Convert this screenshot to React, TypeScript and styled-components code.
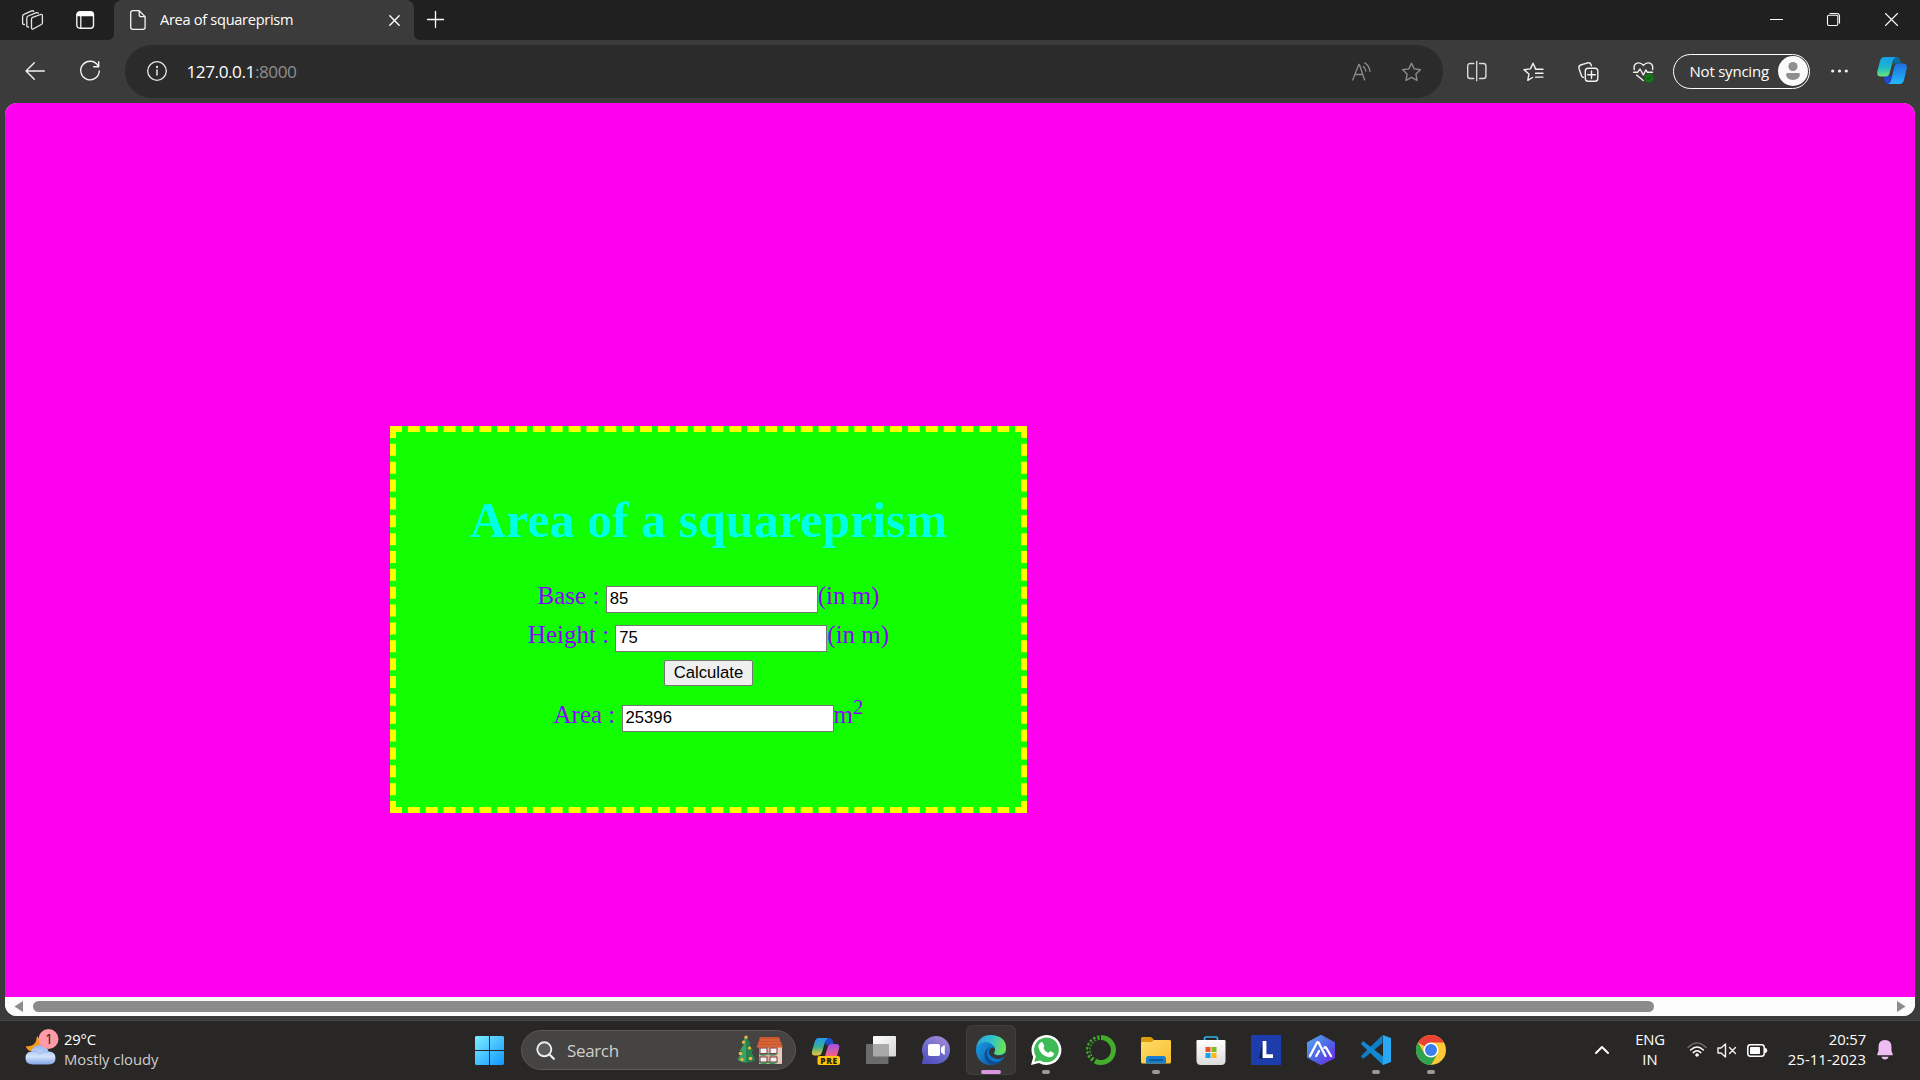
import React from 'react';
import styled, { createGlobalStyle } from 'styled-components';

const GlobalStyle = createGlobalStyle`
  html, body { margin: 0; padding: 0; background: #3b3b3b; overflow: hidden; }
  * { box-sizing: border-box; }
`;

const ui = `'Segoe UI', 'Open Sans', 'Noto Sans', sans-serif`;

const Screen = styled.div`
  width: 1920px;
  height: 1080px;
  display: flex;
  flex-direction: column;
  background: #3b3b3b;
  font-family: ${ui};
  color: #fff;
  overflow: hidden;
`;

/* ---------- shared ---------- */

const Glyph = styled.svg<{ $ml?: number; $mt?: number }>`
  display: block;
  flex: none;
  overflow: visible;
  margin-left: ${p => p.$ml ?? 0}px;
  margin-top: ${p => p.$mt ?? 0}px;
`;

const Label = styled.span<{ $size: number; $track?: number; $color?: string; $ml?: number; $w?: number; $mb?: number }>`
  flex: none;
  font-size: ${p => p.$size}px;
  letter-spacing: ${p => p.$track ?? 0}px;
  color: ${p => p.$color ?? '#fff'};
  margin-left: ${p => p.$ml ?? 0}px;
  margin-bottom: ${p => p.$mb ?? 0}px;
  width: ${p => (p.$w ? `${p.$w}px` : 'auto')};
  white-space: nowrap;
`;

/* ---------- tab strip ---------- */

const TabStrip = styled.header`
  flex: none;
  height: 40px;
  display: flex;
  background: #202020;
`;

const StripTools = styled.div`
  width: 114px;
  display: flex;
  align-items: center;
  background: #202020;
  border-bottom-right-radius: 6px;
`;

const TabBackdrop = styled.div`
  display: flex;
  width: 100%;
  background: linear-gradient(#202020 0 20px, #3b3b3b 20px 40px);
`;

const Tab = styled.div`
  width: 300px;
  display: flex;
  align-items: center;
  background: #3b3b3b;
  border-radius: 8px 8px 0 0;
`;

const StripRest = styled.div`
  flex: 1;
  display: flex;
  align-items: center;
  background: #202020;
  border-bottom-left-radius: 6px;
`;

/* ---------- toolbar ---------- */

const Toolbar = styled.nav`
  flex: none;
  height: 63px;
  display: flex;
  align-items: center;
  background: #3b3b3b;
`;

const Address = styled.div`
  width: 1318px;
  height: 53px;
  margin-left: 25px;
  border-radius: 27px;
  background: #2b2b2b;
  display: flex;
  align-items: center;
`;

const Port = styled.span`
  color: #8e8e8e;
`;

const Profile = styled.div`
  width: 137px;
  height: 35px;
  margin-left: 19px;
  margin-top: -1px;
  border: 1.4px solid #fff;
  border-radius: 18px;
  display: flex;
  align-items: center;
  justify-content: space-between;
  padding: 0 1px 0 16px;
`;

/* ---------- page ---------- */

const Viewport = styled.main`
  flex: none;
  margin: 0 5px;
  height: 913px;
  border-radius: 12px;
  overflow: hidden;
  background: #fcfcfc;
  display: flex;
  flex-direction: column;
`;

const Page = styled.div`
  flex: 1;
  background: #ff00ee;
  padding: 323px 0 0 385px;
`;

const Card = styled.section`
  width: 637px;
  height: 387px;
  border: 6px dashed #ffff00;
  background: #11ff00;
  color: #8a00ff;
  font-family: 'Times New Roman', 'Liberation Serif', serif;
  font-size: 25px;
  display: flex;
  flex-direction: column;
  align-items: center;
`;

const Heading = styled.h1`
  margin: 59px 0 0;
  height: 58px;
  line-height: 58px;
  font-size: 50px;
  font-weight: 700;
  color: #00ffe5;
  white-space: nowrap;
`;

const Row = styled.div<{ $h?: number; $mt?: number }>`
  height: ${p => p.$h ?? 39}px;
  margin-top: ${p => p.$mt ?? 0}px;
  line-height: ${p => p.$h ?? 39}px;
  white-space: pre;
  text-align: center;

  sup {
    font-size: 20.8px;
    line-height: 0;
  }
`;

const Field = styled.input`
  width: 212px;
  height: 27px;
  margin: 0;
  padding: 1px 3px;
  border: 1px solid #767676;
  border-radius: 0;
  background: #fff;
  color: #000;
  font: 16.67px Arial, 'Liberation Sans', sans-serif;
`;

const Calculate = styled.button`
  width: 89px;
  height: 26px;
  margin: 0;
  padding: 0;
  border: 1px solid #767676;
  border-radius: 2px;
  background: #efefef;
  color: #000;
  font: 16.67px/24px Arial, 'Liberation Sans', sans-serif;
`;

const ScrollBar = styled.div`
  flex: none;
  height: 19px;
  display: flex;
  align-items: center;
  background: #fcfcfc;
`;

const Thumb = styled.div`
  width: 1621px;
  height: 11px;
  margin-left: 10px;
  border-radius: 6px;
  background: #8b8b8b;
`;

/* ---------- taskbar ---------- */

const Taskbar = styled.footer`
  flex: none;
  height: 60px;
  margin-top: 4px;
  padding-bottom: 1px;
  display: flex;
  align-items: center;
  background: #292725;
  border-top: 1px solid #464544;
`;

const Weather = styled.div`
  width: 475px;
  display: flex;
  align-items: center;
  padding-left: 24px;
`;

const Stack = styled.div<{ $align: string; $w: number; $ml?: number }>`
  display: flex;
  flex-direction: column;
  align-items: ${p => p.$align};
  width: ${p => p.$w}px;
  margin-left: ${p => p.$ml ?? 0}px;
  margin-bottom: 2px;
  line-height: 20px;
`;

const Search = styled.div`
  width: 275px;
  height: 40px;
  margin-left: 17px;
  border: 1px solid #5b5958;
  border-radius: 20px;
  background: #464442;
  display: flex;
  align-items: center;
`;

const Apps = styled.div`
  display: flex;
  margin-left: 2px;
`;

const AppTile = styled.div<{ $active?: boolean }>`
  width: 50px;
  height: 50px;
  margin: 0 2.5px;
  border-radius: 6px;
  background: ${p => (p.$active ? '#373533' : 'transparent')};
  box-shadow: ${p => (p.$active ? 'inset 0 0 0 1px #403e3d' : 'none')};
  display: flex;
  flex-direction: column;
  align-items: center;
  padding-top: 10px;
`;

const Running = styled.i<{ $active?: boolean }>`
  width: ${p => (p.$active ? 20 : 8)}px;
  height: 4px;
  margin-top: 5px;
  border-radius: 2px;
  background: ${p => (p.$active ? '#d898df' : '#9b9a99')};
`;

const Tray = styled.div`
  display: flex;
  align-items: center;
  margin-left: 137px;
`;

type AppIconProps = { running?: boolean; active?: boolean; children: React.ReactNode };

function TaskApp({ running, active, children }: AppIconProps) {
  return (
    <AppTile $active={active}>
      <Glyph width="30" height="30" viewBox="0 0 30 30">{children}</Glyph>
      {(running || active) && <Running $active={active} />}
    </AppTile>
  );
}

const starPath =
  'M10.5 1.2 L13.2 6.9 L19.4 7.7 L14.9 12 L16 18.3 L10.5 15.3 L5 18.3 L6.1 12 L1.6 7.7 L7.8 6.9 Z';

const line = { fill: 'none', strokeLinecap: 'round', strokeLinejoin: 'round' } as const;

function BrowserTabs() {
  return (
    <TabStrip>
      <TabBackdrop>
        <StripTools>
          <Glyph $ml={22} width="21" height="20" viewBox="0 0 21 20" stroke="#e6e6e6" strokeWidth="1.3" {...line}>
            <path d="M9.5 9 q0-1.2 1.1-1.7 l8-2.8 q1.8-.5 1.8 1.3 v7 q0 1.2-1.1 1.7 l-7.8 4.3 q-2 .8-2-1.1z" />
            <path d="M6.5 17 q-1.7.2-1.7-1.3 V8 q0-1.5 1.3-2 l8.4-3.3 q1.4-.4 1.8.7" />
            <path d="M2.4 14.5 q-1.8.2-1.8-1.3 V6.3 q0-1.5 1.3-2 L9.7.9 q1.5-.5 2 .6" />
          </Glyph>
          <Glyph $ml={33} width="19" height="18" viewBox="0 0 19 18">
            <rect x=".8" y=".8" width="16.7" height="16.4" rx="3" fill="none" stroke="#f2f2f2" strokeWidth="1.4" />
            <path d="M.8 5.2V3.6Q.8.8 3.6.8h11.1q2.8 0 2.8 2.8v1.6z" fill="#fff" />
            <path d="M4.8 5v12" stroke="#f2f2f2" strokeWidth="1.3" />
          </Glyph>
        </StripTools>
        <Tab>
          <Glyph $ml={16} width="16" height="20" viewBox="0 0 16 20" stroke="#f2f2f2" strokeWidth="1.3" {...line}>
            <path d="M2.8.7h6.4l5.9 5.9v10.6q0 2.1-2.1 2.1H2.8Q.7 19.3.7 17.2V2.8Q.7.7 2.8.7z M9.2.9v3.8q0 1.9 1.9 1.9h3.8" />
          </Glyph>
          <Label $size={14.6} $track={-0.3} $ml={14} $w={229} $mb={2}>Area of squareprism</Label>
          <Glyph $ml={0} $mt={1} width="11" height="11" viewBox="0 0 11 11" stroke="#fff" strokeWidth="1.4" {...line}>
            <path d="M.8.8l9.4 9.4M10.2.8L.8 10.2" />
          </Glyph>
        </Tab>
        <StripRest>
          <Glyph $ml={13} $mt={-1} width="17" height="17" viewBox="0 0 17 17" stroke="#fff" strokeWidth="1.3" {...line}>
            <path d="M8.5.5v16M.5 8.5h16" />
          </Glyph>
          <Glyph $ml={1326} $mt={-1} width="13" height="13" viewBox="0 0 13 13">
            <path d="M0 6.5h13" stroke="#fff" strokeWidth="1" />
          </Glyph>
          <Glyph $ml={44} $mt={-1} width="13" height="13" viewBox="0 0 13 13" stroke="#fff" strokeWidth="1.1" {...line}>
            <rect x=".5" y="2.2" width="10.3" height="10.3" rx="1.4" />
            <path d="M3 .5h6.7q2.8 0 2.8 2.8V10" />
          </Glyph>
          <Glyph $ml={45} $mt={-1} width="13" height="13" viewBox="0 0 13 13" stroke="#fff" strokeWidth="1.1" {...line}>
            <path d="M.5.5l12 12M12.5.5l-12 12" />
          </Glyph>
        </StripRest>
      </TabBackdrop>
    </TabStrip>
  );
}

function BrowserToolbar() {
  return (
    <Toolbar>
      <Glyph $ml={25} $mt={-1} width="20" height="18" viewBox="0 0 20 18" stroke="#f2f2f2" strokeWidth="1.4" {...line}>
        <path d="M19.3 9H1M9.3.8L1 9l8.3 8.2" />
      </Glyph>
      <Glyph $ml={35} $mt={-1} width="20" height="20" viewBox="0 0 20 20" stroke="#f2f2f2" strokeWidth="1.4" {...line}>
        <path d="M18.3 5.3A9.3 9.3 0 1 0 19.3 10M18.7.8v5h-5" />
      </Glyph>
      <Address>
        <Glyph $ml={22} $mt={-1} width="20" height="20" viewBox="0 0 20 20" stroke="#e8e8e8" strokeWidth="1.3" {...line}>
          <circle cx="10" cy="10" r="9.3" />
          <path d="M10 9v5" strokeWidth="1.5" />
          <circle cx="10" cy="6" r=".5" fill="#e8e8e8" />
        </Glyph>
        <Label $size={17.2} $track={-0.46} $ml={19.5} $w={1165}>
          127.0.0.1<Port>:8000</Port>
        </Label>
        <Glyph $ml={0.5} $mt={-1} width="19" height="19" viewBox="0 0 19 19" stroke="#8c8c8c" strokeWidth="1.3" {...line}>
          <path d="M.7 18L6.8 2.5h.6L12.6 18M2.9 12.5h7.8" />
          <path d="M11.3 4.4q2.2 1.8 2.6 4.6M12.8.9q4.5 2.8 5.2 8.5" />
        </Glyph>
        <Glyph $ml={29.5} width="21" height="20" viewBox="0 0 21 20" stroke="#8c8c8c" strokeWidth="1.4" {...line}>
          <path d={starPath} />
        </Glyph>
      </Address>
      <Glyph $ml={24} $mt={-1} width="20" height="20" viewBox="0 0 20 20" stroke="#dcdcdc" strokeWidth="1.4" {...line}>
        <path d="M6.8 2.5H3.2Q.7 2.5.7 5v10q0 2.5 2.5 2.5h3.6M12.6 2.5h3.8q2.5 0 2.5 2.5v10q0 2.5-2.5 2.5h-3.8" />
        <path d="M9.7.3v19.4" strokeWidth="1.3" />
      </Glyph>
      <Glyph $ml={35.5} $mt={1} width="21" height="20" viewBox="0 0 21 20" stroke="#f2f2f2" strokeWidth="1.4" {...line}>
        <path d="M9.5 15.5L4.8 18.3 5.9 12 1 7.7l6.4-.8L10 1.2l2.5 5.4M12.5 7.3H20M12.5 11.2H20M12.5 15.1H20" />
      </Glyph>
      <Glyph $ml={34} $mt={1} width="21" height="20" viewBox="0 0 21 20" stroke="#f2f2f2" strokeWidth="1.4" {...line}>
        <rect x="7.3" y="6.3" width="12.5" height="13" rx="2.8" />
        <path d="M13.5 9v7.6M9.7 12.8h7.6" />
        <path d="M5.4 15.4q-1.3-.3-1.9-1.7L1 6.4Q.4 4 2.6 3L9.7.8q2.4-.6 3.3 1.7l.4 1.2" />
      </Glyph>
      <Glyph $ml={34} $mt={1} width="21" height="20" viewBox="0 0 21 20" stroke="#f2f2f2" strokeWidth="1.4" {...line}>
        <path d="M1.2 7.5Q.4 2.5 4 1.2 7.5 0 10.4 3.4 13.3 0 16.8 1.2q3.7 1.3 2.8 6.3" />
        <path d="M.6 10.2h4.2L7 7l3.3 6 2.5-5 1.4 2.2h5.3" />
        <path d="M3.6 13l6.6 5.5" />
        <circle cx="16" cy="16" r="4.6" fill="#137a13" stroke="none" />
        <path d="M14 16.2l1.4 1.3 2.6-2.8" stroke="#0a4b0a" strokeWidth="1" />
      </Glyph>
      <Profile>
        <Label $size={15} $track={-0.22} $mb={1}>Not syncing</Label>
        <Glyph width="30" height="30" viewBox="0 0 30 30">
          <circle cx="15" cy="15" r="15" fill="#fafafa" />
          <circle cx="15" cy="10.5" r="4.6" fill="#8f8f8f" />
          <path d="M8 18.6q0-1.6 1.6-1.6h10.8q1.6 0 1.6 1.6Q21.3 24 15 24t-7-5.4z" fill="#8f8f8f" />
        </Glyph>
      </Profile>
      <Glyph $ml={21.5} $mt={-1} width="17" height="4" viewBox="0 0 17 4" fill="#f2f2f2">
        <circle cx="1.7" cy="2" r="1.6" />
        <circle cx="8.5" cy="2" r="1.6" />
        <circle cx="15.3" cy="2" r="1.6" />
      </Glyph>
      <Glyph $ml={29} $mt={-2} width="30" height="27" viewBox="0 0 30 27">
        <defs>
          <linearGradient id="cpA" x1="0" y1="0" x2="0" y2="1">
            <stop offset="0" stopColor="#159ff0" /><stop offset=".55" stopColor="#1fb9c4" /><stop offset="1" stopColor="#6be27a" />
          </linearGradient>
          <linearGradient id="cpB" x1="0" y1="1" x2="0" y2="0">
            <stop offset="0" stopColor="#22b9fb" /><stop offset="1" stopColor="#1f6fdc" />
          </linearGradient>
        </defs>
        <path d="M17 0h3q2.5 0 3.2 3l.8 3.5h-5q-2 0-2.7 2z" fill="#0a6c9e" />
        <path d="M13 27h-2q-2.5 0-3.2-3L7 19.5h4.5q2 0 2.7-2z" fill="#1c46dd" />
        <path d="M7.5 0H19q-2.2.5-3 3.5l-3.3 12.5Q11.8 19.5 9 19.500H4Q-.5 19.5.2 15L3 4Q4 0 7.5 0z" fill="url(#cpA)" />
        <path d="M22.5 27H11q2.2-.5 3-3.500L17.3 10q.9-3.5 3.7-3.500h5q4.500 0 3.800 4.500L27 23q-1 4-4.500 4z" fill="url(#cpB)" />
      </Glyph>
    </Toolbar>
  );
}

function PrismCalculator() {
  return (
    <Card>
      <Heading>Area of a squareprism</Heading>
      <Row $mt={27}>Base : <Field defaultValue="85" />(in m)</Row>
      <Row>Height : <Field defaultValue="75" />(in m)</Row>
      <Row $h={31}><Calculate>Calculate</Calculate></Row>
      <Row $mt={10}>Area : <Field defaultValue="25396" />m<sup>2</sup></Row>
    </Card>
  );
}

function WindowsTaskbar() {
  return (
    <Taskbar>
      <Weather>
        <Glyph $mt={-6} width="35" height="36" viewBox="0 0 35 36">
          <defs>
            <linearGradient id="cl" x1="0" y1="0" x2="0" y2="1">
              <stop offset="0" stopColor="#8fb5f2" /><stop offset=".6" stopColor="#d3e2fa" /><stop offset="1" stopColor="#7fa5e6" />
            </linearGradient>
          </defs>
          <path d="M13 7Q21 16 12 22L6 22Q2 20 2 17q8 1 10-5z" fill="#f09a1e" />
          <path d="M9 35.5q-7.500 0-7.500-6.500 0-6 6-6.500Q9.5 16 16 16q6.500 0 8.500 6.500 7 0 7 6.500 0 6.500-7 6.500z" fill="url(#cl)" />
          <path d="M7.5 22.5q5-1 8 2.500 3-3 9-2.500" fill="none" stroke="#8caee8" strokeWidth="1" opacity=".7" />
          <circle cx="24.5" cy="10" r="10" fill="#ff9aa8" />
          <text x="25" y="15" fontSize="14" fill="#1c1c1c" textAnchor="middle">1</text>
        </Glyph>
        <Stack $align="flex-start" $w={110} $ml={5}>
          <Label $size={14.8} $track={-0.15}>29°C</Label>
          <Label $size={14.8} $track={-0.03} $color="#cfcecd">Mostly cloudy</Label>
        </Stack>
      </Weather>
      <Glyph width="29" height="29" viewBox="0 0 29 29">
        <defs>
          <linearGradient id="win" x1="0" y1="0" x2="1" y2="1">
            <stop offset="0" stopColor="#7deeff" /><stop offset="1" stopColor="#0f96ff" />
          </linearGradient>
        </defs>
        <path d="M1 0h13v14H0V1zM15 0h13l1 1v13H15zM0 15h14v14H1l-1-1zM15 15h14v13l-1 1H15z" fill="url(#win)" />
      </Glyph>
      <Search>
        <Glyph $ml={14} width="19" height="19" viewBox="0 0 19 19" stroke="#e9eef0" {...line}>
          <circle cx="8.3" cy="8.3" r="7" strokeWidth="1.9" fill="#5c5b5a" />
          <path d="M13.5 13.5l4.300 4.300" strokeWidth="2.3" />
        </Glyph>
        <Label $size={17} $track={-0.35} $ml={12} $w={170}  $color="#cfcecd">Search</Label>
        <Glyph width="46" height="30" viewBox="0 0 46 30">
          <path d="M9 1l4.500 8H12l4 7h-2l4 9q-9 5-17.500 0L5 16H2.500L7 9H4.500z" fill="#3da065" />
          <path d="M9 1l4.500 8H9zM9 9h3l4 7H9zM9 16h5l4 9q-4 2.500-9 2.500z" fill="#28804c" />
          <g fill="#f6b73c">
            <circle cx="9" cy="2.2" r="1.6" /><circle cx="6.5" cy="7" r="1.5" /><circle cx="12.5" cy="13" r="1.5" />
            <circle cx="3.5" cy="18.5" r="1.8" /><circle cx="5" cy="24.5" r="1.6" /><circle cx="13.5" cy="23.5" r="1.8" />
          </g>
          <path d="M22 12h23v17H22z" fill="#d9b2a5" />
          <path d="M40 12h5v16l-5 1z" fill="#ecc9bd" />
          <path d="M23 2h19l4 10.500H19.500z" fill="#c9552c" />
          <path d="M23 5h20M22 8h22M21 11h24" stroke="#e77b4c" strokeWidth=".8" />
          <g fill="#eef3fb" stroke="#8a3a30" strokeWidth="1">
            <rect x="23" y="13" width="7" height="5.5" /><rect x="33" y="13" width="7" height="5.5" />
            <rect x="23" y="22" width="7" height="5" /><rect x="33" y="22" width="7" height="5" />
          </g>
          <path d="M22 18.500q4 3 9 0 5 3 9 0M22 27q4 2.500 9 0 5 2.500 9 0" fill="none" stroke="#2c8a55" strokeWidth="1.4" />
        </Glyph>
      </Search>
      <Apps>
        <TaskApp>
          <defs>
            <linearGradient id="pcA" x1="0" y1="0" x2="0" y2="1">
              <stop offset="0" stopColor="#2499ee" /><stop offset=".5" stopColor="#36b199" /><stop offset="1" stopColor="#f0c52c" />
            </linearGradient>
            <linearGradient id="pcB" x1="0" y1="0" x2="0" y2="1">
              <stop offset="0" stopColor="#a150ec" /><stop offset="1" stopColor="#f5627f" />
            </linearGradient>
          </defs>
          <path d="M15 3h3q3 0 4 3.500L23 9h-4q-2 0-3 2l-2-3z" fill="#1b50c8" />
          <path d="M8 3h9q-2 1-3 4l-3 10q-1 3.500-4 3.500H4Q0 20.500 1 16L4 6q1-3 4-3z" fill="url(#pcA)" />
          <path d="M20 9h5q4 0 3.200 4L26 21H14l2.700-9q.8-3 3.300-3z" fill="url(#pcB)" />
          <rect x="6.5" y="21" width="22.5" height="9" rx="2" fill="#ffc60a" />
          <text x="18" y="28.6" fontSize="8.4" fontWeight="800" fill="#2b2100" textAnchor="middle" letterSpacing=".6">PRE</text>
        </TaskApp>
        <TaskApp>
          <defs>
            <linearGradient id="tv" x1="0" y1="0" x2="1" y2="1"><stop offset="0" stopColor="#fff" /><stop offset="1" stopColor="#d5d5d5" /></linearGradient>
          </defs>
          <rect x="7" y="1" width="23" height="20.5" rx="1" fill="url(#tv)" />
          <rect x="0" y="9" width="22.5" height="20" rx="1" fill="#6c6b6b" />
          <rect x="7" y="9" width="15.5" height="12.5" fill="#a9a9a9" />
        </TaskApp>
        <TaskApp>
          <defs>
            <linearGradient id="ch" x1=".8" y1="0" x2=".3" y2="1"><stop offset="0" stopColor="#a889d8" /><stop offset=".5" stopColor="#6f6fce" /><stop offset="1" stopColor="#5350bd" /></linearGradient>
          </defs>
          <path d="M15 1a14 14 0 1 1 0 28H2q-1.500 0-1-1.300L2.500 21.500A14 14 0 0 1 15 1z" fill="url(#ch)" />
          <rect x="7" y="9" width="12" height="12" rx="1.8" fill="#fff" />
          <path d="M20 12.800l3-2.500q.8-.3.800.700v8q0 1-.8.700l-3-2.500z" fill="#fff" />
        </TaskApp>
        <TaskApp active>
          <defs>
            <linearGradient id="eA" x1="0" y1=".3" x2="1" y2=".5"><stop offset="0" stopColor="#2aa6de" /><stop offset=".5" stopColor="#32c3c6" /><stop offset="1" stopColor="#6fe34f" /></linearGradient>
            <linearGradient id="eB" x1="0" y1="0" x2="1" y2="1"><stop offset="0" stopColor="#1b9de2" /><stop offset="1" stopColor="#0c59a4" /></linearGradient>
          </defs>
          <circle cx="15" cy="15" r="15" fill="#0b7ad0" />
          <path d="M.3 12.500Q2.500 0 15 0q15 1 15 13 0 7-7.500 7-5 0-4.500-2.500Q20 15 18 11.500 13 5.500 6 8 2 9.500.3 12.500z" fill="url(#eA)" />
          <path d="M0 14Q2 7.500 9 7.500q6 0 9 4.500-6-1-8 4-2 7 4 11.500l1.500 2.500Q1 30 0 14z" fill="url(#eB)" />
          <path d="M18 12q-6-.5-7 5-.5 7 7 9.500 5.500 1 10-4Q24 30 15 30 8 26 8.500 19q1-8 9.500-7z" fill="#0d4f92" />
          <path d="M18.500 12.500q1.500 3-.5 5-.5 2.500 4.500 3 4.500 0 6.500-2.500l1 2q-5 5.500-11 3.500-7.500-3-6-8 1.500-3.500 5.500-3z" fill="#373533" />
        </TaskApp>
        <TaskApp running>
          <path d="M0 30L2.200 22A15 15 0 1 1 8 28z" fill="#fff" />
          <path d="M3.300 26.800L4.900 21.300A12.400 12.400 0 1 1 9 25.400z" fill="#3dbb56" />
          <path d="M9.500 7.500q1.300-1 2.300.3l1.500 3q.3 1-1 2.200 1.500 3.500 5 5 1.400-2 2.200-1.700l3 1.500q.8.700.2 2.200-1.500 2.800-5 2.200Q9.500 20.500 7.500 12.500q-.3-3.500 2-5z" fill="#fff" />
        </TaskApp>
        <TaskApp>
          <path d="M15 2.500A12.500 12.500 0 1 1 9 26" fill="none" stroke="#41ad2b" strokeWidth="5" />
          <path d="M13.500 2.500A12.500 12.500 0 0 0 8 25.400" fill="none" stroke="#41ad2b" strokeWidth="4.5" strokeDasharray="2.2 1.7" />
          <path d="M11 4A11.500 11.500 0 0 0 6 23" fill="none" stroke="#292725" strokeWidth="1.2" strokeDasharray="2.5 1.5" />
        </TaskApp>
        <TaskApp running>
          <defs>
            <linearGradient id="fo" x1="0" y1="0" x2="1" y2="1"><stop offset="0" stopColor="#ffdd6b" /><stop offset="1" stopColor="#f9bd2b" /></linearGradient>
          </defs>
          <path d="M0 3.500Q0 2 1.500 2H9q1.200 0 2 .8L13 5h15.500Q30 5 30 6.500V20H0z" fill="#dd9c0a" />
          <path d="M0 8q0-1 1-1h9.500L13 5h15.500Q30 5 30 6.500V27q0 1.500-1.500 1.500h-27Q0 28.500 0 27z" fill="url(#fo)" />
          <path d="M5 28.500V23.500Q5 21 7.500 21h15q2.500 0 2.500 2.500v5z" fill="#1680ce" />
          <path d="M8.500 25h13" stroke="#0c4c8e" strokeWidth="1.3" strokeLinecap="round" />
        </TaskApp>
        <TaskApp>
          <defs>
            <linearGradient id="sto" x1="0" y1="0" x2="0" y2="1"><stop offset="0" stopColor="#fff" /><stop offset="1" stopColor="#dcdcdc" /></linearGradient>
          </defs>
          <path d="M8.500 7V3.500Q8.500 2 10 2h10q1.500 0 1.500 1.500V7" fill="none" stroke="#2db5e8" strokeWidth="1.7" />
          <path d="M.5 6q0-1 1-1h27q1 0 1 1v19.500q0 4.500-4.500 4.500H5Q.5 30 .5 25.500z" fill="url(#sto)" />
          <path d="M9.500 12h5v5h-5z" fill="#f0512a" /><path d="M15.500 12h5v5h-5z" fill="#7fba1e" />
          <path d="M9.500 18h5v5h-5z" fill="#14a4ea" /><path d="M15.500 18h5v5h-5z" fill="#fdb90f" />
        </TaskApp>
        <TaskApp>
          <rect width="30" height="30" fill="#1c3dab" />
          <path d="M11.500 7L8 23.500h4z" fill="#0c2457" />
          <path d="M13.500 6v15.200H22" fill="none" stroke="#fff" strokeWidth="3.8" />
        </TaskApp>
        <TaskApp>
          <defs>
            <linearGradient id="hx" x1="0" y1="0" x2="1" y2="1"><stop offset="0" stopColor="#55a9ee" /><stop offset=".55" stopColor="#4d63e3" /><stop offset="1" stopColor="#7328ea" /></linearGradient>
          </defs>
          <path d="M15 1L28 8v14.500L15 29 2 22V8z" fill="url(#hx)" stroke="url(#hx)" strokeWidth="2" strokeLinejoin="round" />
          <path d="M4 21L10.800 8q1-1.500 2 0L19.500 21M10.300 21l2.800-5M18.300 12.800q1-1.500 1.900 0L25 21" fill="none" stroke="#fff" strokeWidth="2.3" strokeLinecap="round" strokeLinejoin="round" />
        </TaskApp>
        <TaskApp running>
          <path d="M21.500 0v8L3 23.300Q2.200 24 1.500 23.300L.3 22q-.6-.8.200-1.500z" fill="#0f7dc6" />
          <path d="M22 30v-8.500L3 6.700Q2.200 6 1.500 6.700L.3 8q-.6.8.200 1.500z" fill="#1189d2" />
          <path d="M22 0L30 3v24l-8 3z" fill="#29a8f3" />
        </TaskApp>
        <TaskApp running>
          <circle cx="15" cy="15" r="15" fill="#fcc934" />
          <path d="M15 15L2 7.500A15 15 0 0 1 28 7.500H15z" fill="#ea4335" />
          <path d="M2 7.500A15 15 0 0 0 15 30l6.500-11.300L15 15 8.500 18.700z" fill="#2fa24f" />
          <circle cx="15" cy="15" r="7.5" fill="#fff" />
          <circle cx="15" cy="15" r="6" fill="#3b7fee" />
        </TaskApp>
      </Apps>
      <Tray>
        <Glyph width="14" height="8" viewBox="0 0 14 8" stroke="#fff" strokeWidth="2" {...line}>
          <path d="M1 7l6-6 6 6" />
        </Glyph>
        <Stack $align="center" $w={40} $ml={21}>
          <Label $size={14.8} $track={-0.2}>ENG</Label>
          <Label $size={14.8}>IN</Label>
        </Stack>
        <Glyph $ml={17} $mt={-1} width="20" height="15" viewBox="0 0 20 15" stroke="#fff" strokeWidth="1.5" {...line}>
          <path d="M1 5.500q9-9 18 0" stroke="#6c6b6a" />
          <path d="M3.600 8q6.400-6 12.800 0M6.200 10.600q3.800-3.600 7.600 0" />
          <circle cx="10" cy="13" r="1.4" fill="#fff" strokeWidth=".6" />
        </Glyph>
        <Glyph $ml={10} width="20" height="15" viewBox="0 0 20 15" stroke="#f2f2f2" strokeWidth="1.4" {...line}>
          <path d="M1 5h3L8.500.9v13.200L4 10H1zM12.500 4.500l6 6M18.500 4.500l-6 6" />
        </Glyph>
        <Glyph $ml={10} width="21" height="13" viewBox="0 0 21 13">
          <rect x=".8" y=".8" width="16.4" height="11.4" rx="2.6" fill="none" stroke="#fff" strokeWidth="1.5" />
          <rect x="3" y="3" width="10" height="7" rx=".8" fill="#fff" />
          <path d="M18 3.800q2.300.5 2.300 2.700T18 9.200z" fill="#fff" />
        </Glyph>
        <Stack $align="flex-end" $w={98}>
          <Label $size={14.8} $track={-0.1}>20:57</Label>
          <Label $size={14.8} $track={0.1}>25-11-2023</Label>
        </Stack>
        <Glyph $ml={10} $mt={0} width="18" height="20" viewBox="0 0 18 20" fill="#eebdf2">
          <path d="M9 0q6.500 0 6.500 7v4l1.300 3.200q.2 1-.8 1H2q-1 0-.8-1L2.500 11V7Q2.500 0 9 0zM5.500 16.800h7Q12 19.500 9 19.500t-3.500-2.700z" />
        </Glyph>
      </Tray>
    </Taskbar>
  );
}

export default function App() {
  return (
    <Screen>
      <GlobalStyle />
      <BrowserTabs />
      <BrowserToolbar />
      <Viewport>
        <Page>
          <PrismCalculator />
        </Page>
        <ScrollBar>
          <Glyph $ml={9} width="9" height="11" viewBox="0 0 9 11">
            <path d="M9 0v11L.5 5.500z" fill="#8b8b8b" />
          </Glyph>
          <Thumb />
          <Glyph $ml={243} width="9" height="11" viewBox="0 0 9 11">
            <path d="M0 0v11l8.500-5.500z" fill="#8b8b8b" />
          </Glyph>
        </ScrollBar>
      </Viewport>
      <WindowsTaskbar />
    </Screen>
  );
}
